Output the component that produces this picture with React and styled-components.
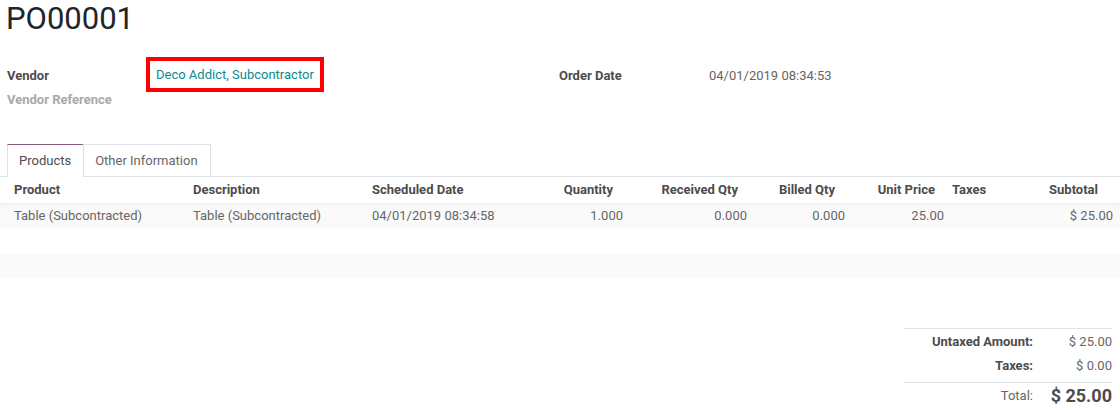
import React from 'react';
import styled, { createGlobalStyle } from 'styled-components';

const Global = createGlobalStyle`
  html, body { margin: 0; padding: 0; background: #fff; }
  body {
    font-family: Roboto, "Noto Sans", "Liberation Sans", sans-serif;
    font-size: 13px;
    color: #666666;
  }
`;

const Page = styled.div`
  width: 1120px;
`;

const Title = styled.h1`
  margin: 0;
  padding-left: 6px;
  font-size: 31px;
  line-height: 38px;
  font-weight: 400;
  color: #212529;
`;

const Groups = styled.div`
  display: grid;
  grid-template-columns: 552px 1fr;
  margin-top: 26px;
  padding: 0 7px;
`;

const Group = styled.div`
  display: flex;
  flex-direction: column;
`;

const FieldRow = styled.div`
  display: grid;
  grid-template-columns: 150px 1fr;
  align-items: start;
  line-height: 24px;
`;

const Label = styled.div`
  font-weight: 700;
  color: ${(p) => (p.$muted ? '#a9a9a9' : '#4c4c4c')};
`;

const Value = styled.div`
  display: flex;
  color: #666666;
`;

const Highlight = styled.div`
  border: 4px solid #ff0000;
  padding: 2px 6px 1px;
  margin: -7px 0 -4px -11px;
  line-height: 24px;
`;

const Link = styled.a`
  color: #0b8a91;
  text-decoration: none;
  cursor: pointer;
`;

const TabNav = styled.div`
  display: flex;
  margin-top: 32px;
  padding-left: 7px;
  border-bottom: 1px solid #dee2e6;
`;

const Tab = styled.div`
  box-sizing: border-box;
  line-height: 31px;
  padding: 0 12px 0 11px;
  border: 1px solid #dee2e6;
  border-bottom: none;
  border-top-color: ${(p) => (p.$active ? '#875a7b' : '#dee2e6')};
  background: #fff;
  color: ${(p) => (p.$active ? '#4c4c4c' : '#666666')};
  margin-bottom: ${(p) => (p.$active ? '-1px' : '0')};
  height: ${(p) => (p.$active ? '33px' : '32px')};
  & + & { margin-left: -1px; }
`;

const cols = '186px 179px 179px 86px 124px 98px 99px 54px 1fr';

const HeadRow = styled.div`
  display: grid;
  grid-template-columns: ${cols};
  height: 26px;
  line-height: 25px;
  font-weight: 700;
  color: #4c4c4c;
`;

const Row = styled.div`
  display: grid;
  grid-template-columns: ${cols};
  height: 25px;
  line-height: 25px;
  color: #666666;
  background: ${(p) => (p.$striped ? '#fafafa' : '#fff')};
  &:first-child {
    box-shadow: inset 0 4px 4px -3px rgba(0, 0, 0, 0.07);
  }
`;

const Cell = styled.div`
  white-space: nowrap;
  overflow: hidden;
  text-align: ${(p) => (p.$num ? 'right' : 'left')};
  padding-left: ${(p) => (p.$first ? '14px' : p.$lpad || '7px')};
  padding-right: ${(p) => (p.$num ? (p.$head ? p.$pad || '16px' : '7px') : '0')};
`;

const Body = styled.div``;

const Totals = styled.div`
  width: 208px;
  margin: 25px 8px 0 auto;
  border-top: 1px solid #dee2e6;
  padding-top: 1px;
`;

const TotalRow = styled.div`
  display: grid;
  grid-template-columns: 1fr 72px;
  line-height: 24px;
  ${(p) => p.$grand && `border-top: 1px solid #dee2e6; margin-top: 4px; line-height: 25px;`}
`;

const TotalLabel = styled.div`
  text-align: right;
  padding-right: 7px;
  font-weight: ${(p) => (p.$plain ? 400 : 700)};
  color: ${(p) => (p.$plain ? '#666666' : '#4c4c4c')};
`;

const TotalValue = styled.div`
  text-align: right;
  white-space: nowrap;
  color: ${(p) => (p.$big ? '#4c4c4c' : '#666666')};
  font-size: ${(p) => (p.$big ? '18px' : '13px')};
  font-weight: ${(p) => (p.$big ? 700 : 400)};
`;

const headers = [
  { t: 'Product', first: true },
  { t: 'Description' },
  { t: 'Scheduled Date' },
  { t: 'Quantity', num: true, pad: '17px' },
  { t: 'Received Qty', num: true },
  { t: 'Billed Qty', num: true, pad: '17px' },
  { t: 'Unit Price', num: true },
  { t: 'Taxes', lpad: '1px' },
  { t: 'Subtotal', num: true, pad: '22px' },
];

const line = [
  'Table (Subcontracted)',
  'Table (Subcontracted)',
  '04/01/2019 08:34:58',
  '1.000',
  '0.000',
  '0.000',
  '25.00',
  '',
  '$ 25.00',
];

export default function App() {
  return (
    <Page>
      <Global />
      <Title>PO00001</Title>
      <Groups>
        <Group>
          <FieldRow>
            <Label>Vendor</Label>
            <Value>
              <Highlight>
                <Link>Deco Addict, Subcontractor</Link>
              </Highlight>
            </Value>
          </FieldRow>
          <FieldRow>
            <Label $muted>Vendor Reference</Label>
            <Value />
          </FieldRow>
        </Group>
        <Group>
          <FieldRow>
            <Label>Order Date</Label>
            <Value>04/01/2019 08:34:53</Value>
          </FieldRow>
        </Group>
      </Groups>
      <TabNav>
        <Tab $active>Products</Tab>
        <Tab>Other Information</Tab>
      </TabNav>
      <HeadRow>
        {headers.map((h) => (
          <Cell key={h.t} $first={h.first} $num={h.num} $pad={h.pad} $lpad={h.lpad} $head>
            {h.t}
          </Cell>
        ))}
      </HeadRow>
      <Body>
        <Row $striped>
          {line.map((v, i) => (
            <Cell key={i} $first={i === 0} $num={headers[i].num} $lpad={headers[i].lpad}>
              {v}
            </Cell>
          ))}
        </Row>
        <Row />
        <Row $striped />
        <Row />
      </Body>
      <Totals>
        <TotalRow>
          <TotalLabel>Untaxed Amount:</TotalLabel>
          <TotalValue>$ 25.00</TotalValue>
        </TotalRow>
        <TotalRow>
          <TotalLabel>Taxes:</TotalLabel>
          <TotalValue>$ 0.00</TotalValue>
        </TotalRow>
        <TotalRow $grand>
          <TotalLabel $plain>Total:</TotalLabel>
          <TotalValue $big>$ 25.00</TotalValue>
        </TotalRow>
      </Totals>
    </Page>
  );
}
